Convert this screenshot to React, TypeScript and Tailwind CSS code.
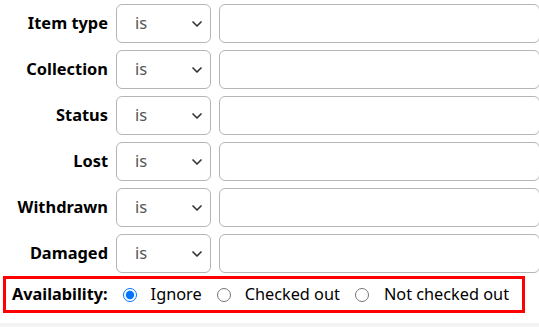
import { ChevronDown } from "lucide-react"

const fields = ["Item type", "Collection", "Status", "Lost", "Withdrawn", "Damaged"]

function FilterRow({ label }: { label: string }) {
    return (
        <div className="flex items-center h-[39px]">
            <label className="w-[108px] shrink-0 text-right font-bold text-[16.4px] text-black">{label}</label>
            <div className="ml-2 w-[95px] h-[39px] shrink-0 flex items-center justify-between pl-[18px] pr-[5px] border border-[#b5b5b5] rounded-md bg-white">
                <span className="text-[16.5px] text-[#555]">is</span>
                <ChevronDown className="w-[16px] h-[16px] text-[#333]" strokeWidth={2.5} />
            </div>
            <input type="text" className="ml-2 h-[39px] w-[321px] shrink-0 border border-[#b5b5b5] rounded-md bg-white outline-none" />
        </div>
    )
}

export default function App() {
    return (
        <div className="w-[539px] h-[327px] overflow-hidden bg-white flex flex-col" style={{ fontFamily: '"Noto Sans", "Open Sans", sans-serif' }}>
            <div className="flex flex-col gap-[7px] pt-1">
                {fields.map((f) => (
                    <FilterRow key={f} label={f} />
                ))}
            </div>
            <div className="mt-[3px] ml-[3px] w-[522px] h-[37px] border-[3px] border-[#ff0000] flex items-center pl-[6px] text-[16.3px] text-black">
                <span className="font-bold">Availability:</span>
                <label className="flex items-center ml-[15px]">
                    <input type="radio" name="avail" defaultChecked className="m-0 w-[14px] h-[14px]" />
                    <span className="ml-[14px]">Ignore</span>
                </label>
                <label className="flex items-center ml-[15px]">
                    <input type="radio" name="avail" className="m-0 w-[14px] h-[14px]" />
                    <span className="ml-[14px]">Checked out</span>
                </label>
                <label className="flex items-center ml-[15px]">
                    <input type="radio" name="avail" className="m-0 w-[14px] h-[14px]" />
                    <span className="ml-[15px]">Not checked out</span>
                </label>
            </div>
            <div className="mt-[10px] flex-1 bg-[#f3f3f3]" />
        </div>
    )
}
